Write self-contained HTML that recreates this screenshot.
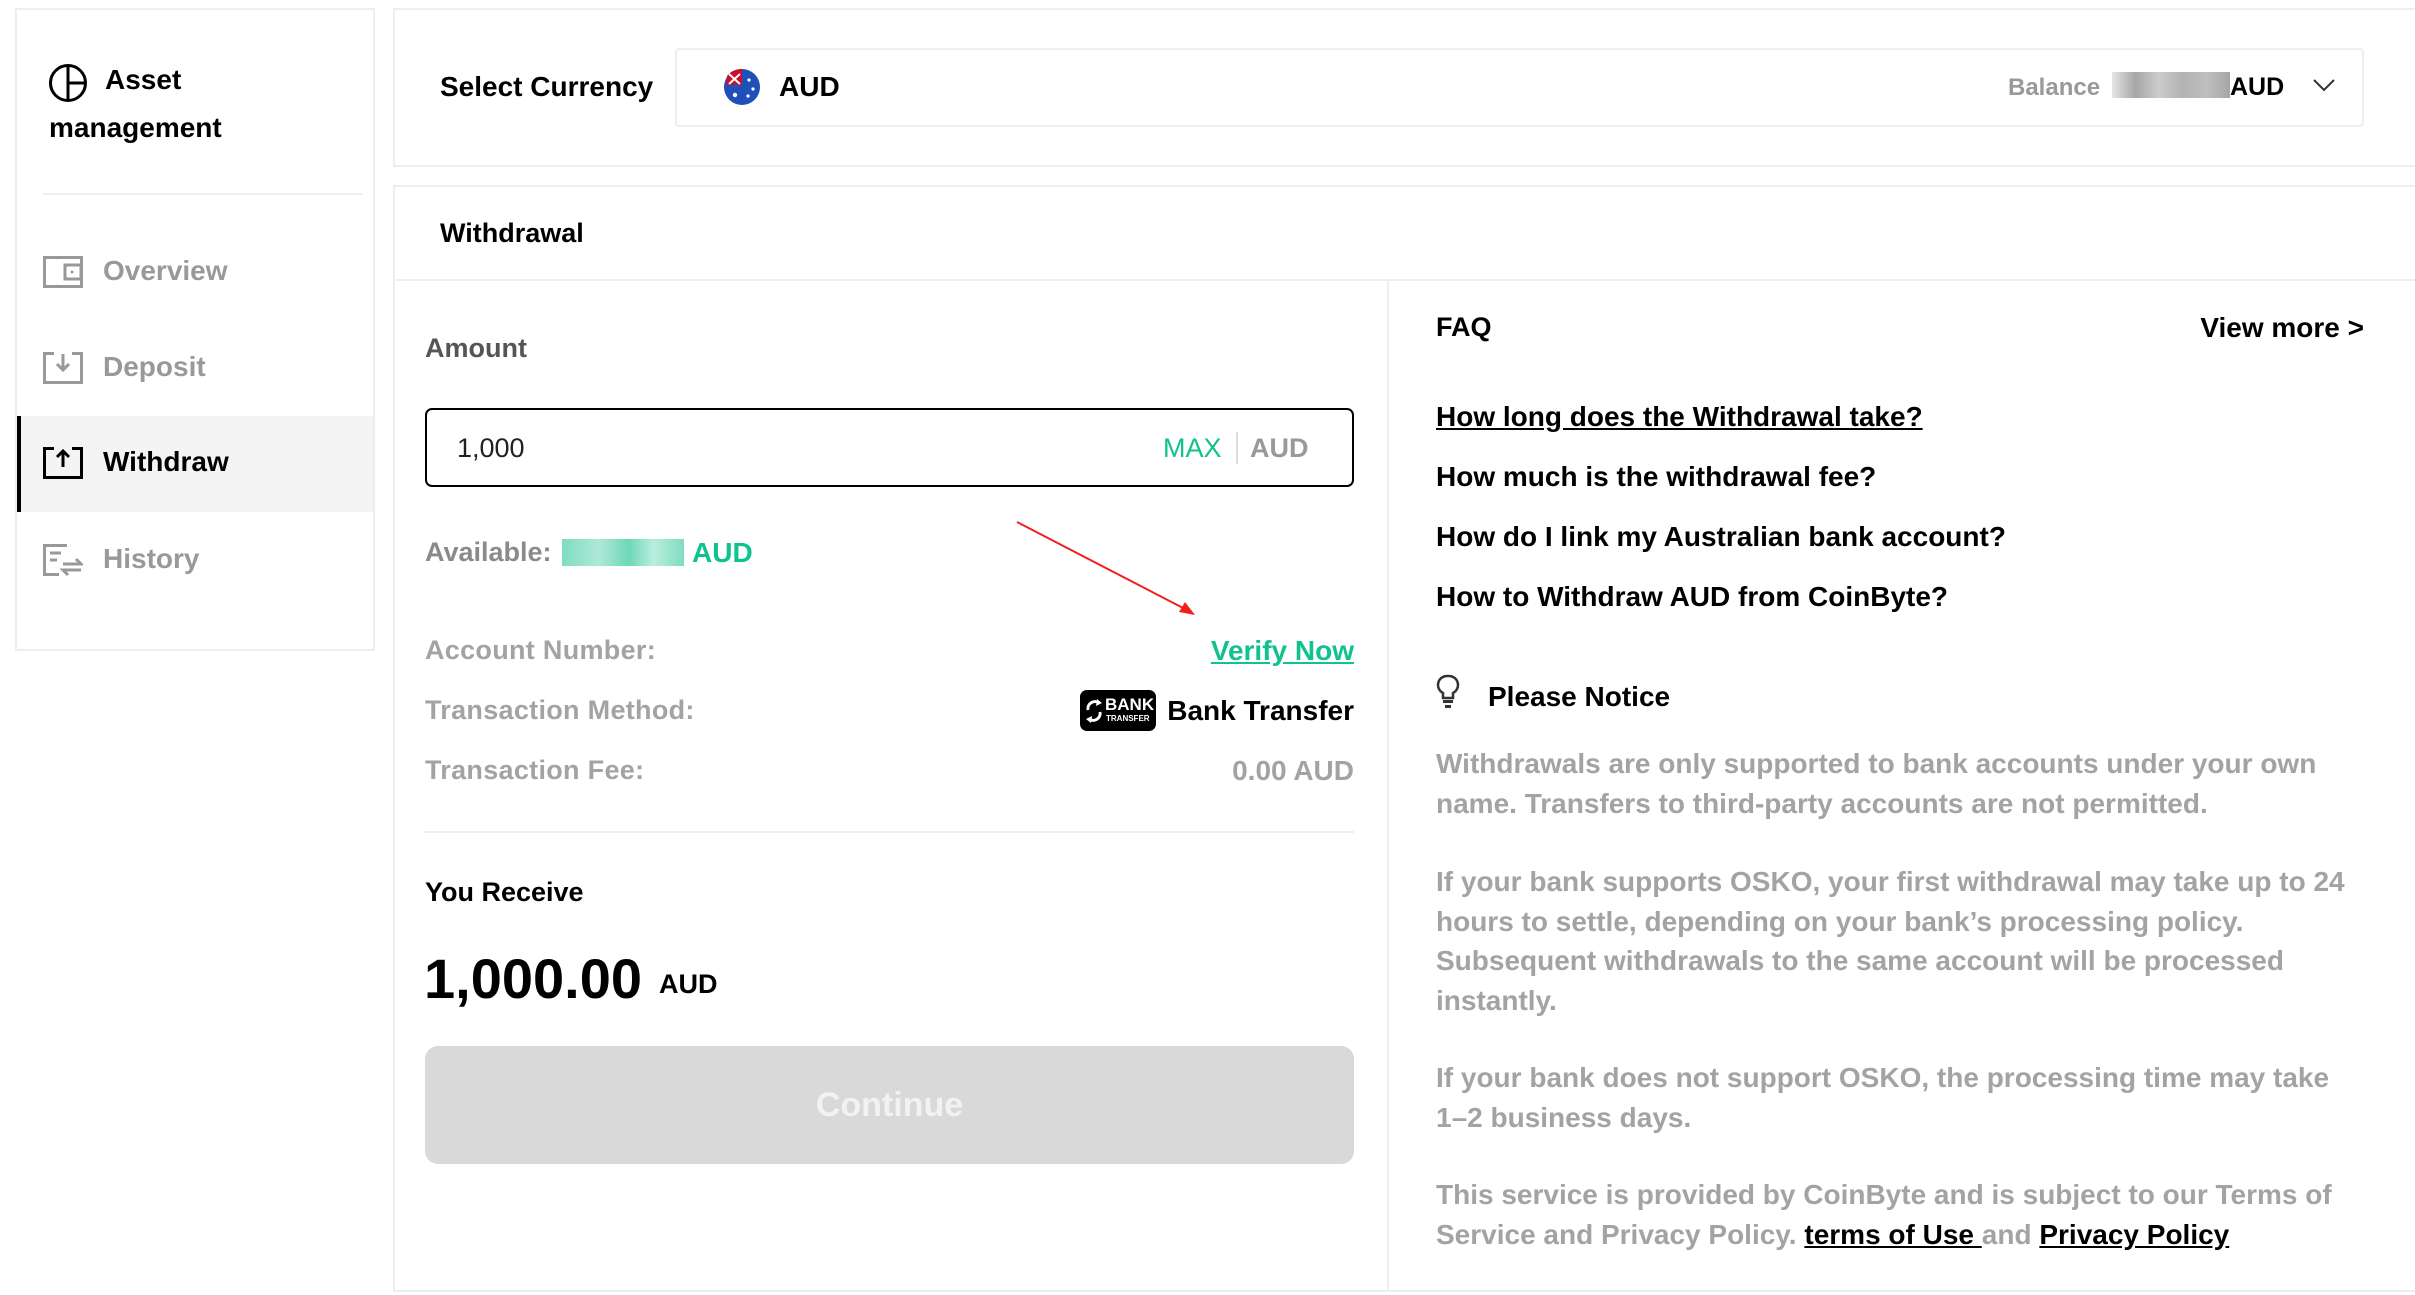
<!DOCTYPE html>
<html><head><meta charset="utf-8"><style>
*{margin:0;padding:0;box-sizing:border-box}
body{width:2415px;height:1295px;background:#fff;font-family:"Liberation Sans",Arial,sans-serif;position:relative;overflow:hidden;color:#000}
.a{position:absolute;white-space:nowrap}
.b{font-weight:bold}
.card{position:absolute;border:2px solid #eceef1;background:#fff}
.g{color:#999}
.grn{color:#10c28e}
.p{position:absolute;left:1436px;font-size:28px;font-weight:bold;color:#a3a3a3;line-height:39.5px;white-space:nowrap}
.faq{font-size:28px;font-weight:bold;left:1436px}
</style></head><body>

<!-- sidebar -->
<div class="card" style="left:15px;top:8px;width:360px;height:643px"></div>
<svg class="a" style="left:48px;top:63px" width="40" height="40" viewBox="0 0 40 40"><circle cx="20" cy="20" r="17.5" fill="none" stroke="#000" stroke-width="3"/><line x1="20" y1="2" x2="20" y2="38" stroke="#000" stroke-width="3"/><line x1="20" y1="20" x2="37" y2="20" stroke="#000" stroke-width="3"/></svg>
<div class="a b" style="left:105px;top:64px;font-size:28px">Asset</div>
<div class="a b" style="left:49px;top:112px;font-size:28px">management</div>
<div class="a" style="left:43px;top:193px;width:319px;height:2px;background:#eceef1"></div>

<svg class="a" style="left:43px;top:256px" width="40" height="32" viewBox="0 0 40 32" fill="none" stroke="#999" stroke-width="3"><rect x="1.5" y="1.5" width="37" height="29"/><rect x="22" y="9" width="16" height="14"/><circle cx="29" cy="16" r="1.5" fill="#999" stroke="none"/></svg>
<div class="a b g" style="left:103px;top:255px;font-size:28px">Overview</div>

<svg class="a" style="left:43px;top:352px" width="40" height="32" viewBox="0 0 40 32" fill="none" stroke="#999" stroke-width="3"><path d="M11 1.5H1.5V30.5H38.5V1.5H29"/><path d="M20 2V18M14 12L20 18L26 12"/></svg>
<div class="a b g" style="left:103px;top:351px;font-size:28px">Deposit</div>

<div class="a" style="left:17px;top:416px;width:356px;height:96px;background:#f4f4f4"></div>
<div class="a" style="left:17px;top:416px;width:4px;height:96px;background:#000"></div>
<svg class="a" style="left:43px;top:447px" width="40" height="32" viewBox="0 0 40 32" fill="none" stroke="#000" stroke-width="3"><path d="M11 1.5H1.5V30.5H38.5V1.5H29"/><path d="M20 20V4M14 10L20 4L26 10"/></svg>
<div class="a b" style="left:103px;top:446px;font-size:28px">Withdraw</div>

<svg class="a" style="left:43px;top:544px" width="40" height="32" viewBox="0 0 40 32" fill="none" stroke="#999" stroke-width="3"><path d="M24 1.5H1.5V30.5H16"/><path d="M7 9H18M7 16H14"/><path d="M20 20H38L33 15M38 26H20L25 31"/></svg>
<div class="a b g" style="left:103px;top:543px;font-size:28px">History</div>

<!-- top card -->
<div class="card" style="left:393px;top:8px;width:2030px;height:159px"></div>
<div class="a b" style="left:440px;top:71px;font-size:28px">Select Currency</div>
<div class="a" style="left:675px;top:48px;width:1689px;height:79px;border:2px solid #eceef1;border-radius:4px"></div>
<svg class="a" style="left:723px;top:68px" width="38" height="38" viewBox="0 0 38 38"><circle cx="19" cy="19" r="18" fill="#1f4fb8"/><path d="M4 8A18 18 0 0 1 19 1V17H3Z" fill="#c8102e"/><path d="M6 6L17 16M17 6L6 16" stroke="#fff" stroke-width="2"/><circle cx="26" cy="12" r="1.6" fill="#fff"/><circle cx="30" cy="21" r="1.6" fill="#fff"/><circle cx="25" cy="28" r="1.6" fill="#fff"/><circle cx="12" cy="27" r="2.2" fill="#fff"/></svg>
<div class="a b" style="left:779px;top:71px;font-size:28px">AUD</div>
<div class="a b g" style="left:2008px;top:74px;font-size:24px">Balance</div>
<div class="a" style="left:2112px;top:72px;width:118px;height:26px;background:linear-gradient(90deg,#ddd,#888 20%,#bbb 40%,#999 60%,#aaa 80%,#888);opacity:.75"></div>
<div class="a b" style="left:2230px;top:73px;font-size:25px">AUD</div>
<svg class="a" style="left:2312px;top:78px" width="24" height="14" viewBox="0 0 24 14"><path d="M2 2L12 12L22 2" fill="none" stroke="#333" stroke-width="2"/></svg>

<!-- main card -->
<div class="card" style="left:393px;top:185px;width:2030px;height:1107px"></div>
<div class="a b" style="left:440px;top:218px;font-size:27px">Withdrawal</div>
<div class="a" style="left:395px;top:279px;width:2020px;height:2px;background:#eceef1"></div>
<div class="a" style="left:1387px;top:281px;width:2px;height:1010px;background:#eceef1"></div>

<div class="a b" style="left:425px;top:333px;font-size:27px;color:#555">Amount</div>
<div class="a" style="left:425px;top:408px;width:929px;height:79px;border:2.5px solid #000;border-radius:7px"></div>
<div class="a" style="left:457px;top:433px;font-size:27px;color:#222">1,000</div>
<div class="a grn" style="left:1163px;top:433px;font-size:27px">MAX</div>
<div class="a" style="left:1236px;top:432px;width:2px;height:32px;background:#ddd"></div>
<div class="a b g" style="left:1250px;top:433px;font-size:27px">AUD</div>

<div class="a b g" style="left:425px;top:537px;font-size:27px;color:#8a8a8a">Available:</div>
<div class="a" style="left:562px;top:539px;width:122px;height:27px;background:linear-gradient(90deg,#7fdcc0,#aee9d7 30%,#6fd7b8 55%,#b9eedd 75%,#7fdcc0);"></div>
<div class="a b grn" style="left:692px;top:537px;font-size:28px">AUD</div>

<svg class="a" style="left:1015px;top:520px" width="185" height="100" viewBox="0 0 185 100"><line x1="2" y1="2" x2="172" y2="90" stroke="#f02020" stroke-width="2"/><path d="M180 95L164 92L170 82Z" fill="#f02020"/></svg>

<div class="a b" style="left:425px;top:635px;font-size:27px;color:#a3a3a3;letter-spacing:.3px">Account Number:</div>
<div class="a b grn" style="right:1061px;top:635px;font-size:28px;text-decoration:underline">Verify Now</div>
<div class="a b" style="left:425px;top:695px;font-size:27px;color:#a3a3a3;letter-spacing:.3px">Transaction Method:</div>
<div class="a" style="left:1080px;top:690px;width:76px;height:41px;background:#000;border-radius:7px;color:#fff">
 <svg class="a" style="left:4px;top:8px" width="20" height="26" viewBox="0 0 20 26"><path d="M4 12A7 7 0 0 1 15 5M16 14A7 7 0 0 1 5 21" fill="none" stroke="#fff" stroke-width="3"/><path d="M13 1L18 5L12 8Z M7 25L2 21L8 18Z" fill="#fff"/></svg>
 <div class="a b" style="left:25px;top:5px;font-size:17px">BANK</div>
 <div class="a b" style="left:26px;top:24px;font-size:8px">TRANSFER</div>
</div>
<div class="a b" style="right:1061px;top:695px;font-size:28px">Bank Transfer</div>
<div class="a b" style="left:425px;top:755px;font-size:27px;color:#a3a3a3;letter-spacing:.3px">Transaction Fee:</div>
<div class="a b" style="right:1061px;top:755px;font-size:28px;color:#a3a3a3">0.00 AUD</div>
<div class="a" style="left:425px;top:831px;width:929px;height:2px;background:#eceef1"></div>

<div class="a b" style="left:425px;top:877px;font-size:27px">You Receive</div>
<div class="a b" style="left:424px;top:946px;font-size:56px">1,000.00</div>
<div class="a b" style="left:659px;top:969px;font-size:27px">AUD</div>
<div class="a" style="left:425px;top:1046px;width:929px;height:118px;background:#d9d9d9;border-radius:13px"></div>
<div class="a b" style="left:425px;top:1086px;width:929px;text-align:center;font-size:34px;color:#f2f2f2">Continue</div>

<!-- right column -->
<div class="a b" style="left:1436px;top:312px;font-size:27px">FAQ</div>
<div class="a b" style="right:51px;top:312px;font-size:28px">View more &gt;</div>
<div class="a faq" style="top:401px;text-decoration:underline">How long does the Withdrawal take?</div>
<div class="a faq" style="top:461px">How much is the withdrawal fee?</div>
<div class="a faq" style="top:521px">How do I link my Australian bank account?</div>
<div class="a faq" style="top:581px">How to Withdraw AUD from CoinByte?</div>

<svg class="a" style="left:1436px;top:674px" width="24" height="36" viewBox="0 0 24 36"><path d="M12 2A9 9 0 0 0 7 19V24H17V19A9 9 0 0 0 12 2Z" fill="none" stroke="#333" stroke-width="2.5"/><rect x="7" y="26" width="10" height="3" fill="#333"/><rect x="9" y="31" width="6" height="3" fill="#333"/></svg>
<div class="a b" style="left:1488px;top:681px;font-size:28px">Please Notice</div>

<div class="p" style="top:744px">Withdrawals are only supported to bank accounts under your own<br>name. Transfers to third-party accounts are not permitted.</div>
<div class="p" style="top:862px">If your bank supports OSKO, your first withdrawal may take up to 24<br>hours to settle, depending on your bank’s processing policy.<br>Subsequent withdrawals to the same account will be processed<br>instantly.</div>
<div class="p" style="top:1058px">If your bank does not support OSKO, the processing time may take<br>1–2 business days.</div>
<div class="p" style="top:1175px">This service is provided by CoinByte and is subject to our Terms of<br>Service and Privacy Policy. <span style="color:#000;text-decoration:underline">terms of Use </span>and <span style="color:#000;text-decoration:underline">Privacy Policy</span></div>
</body></html>
